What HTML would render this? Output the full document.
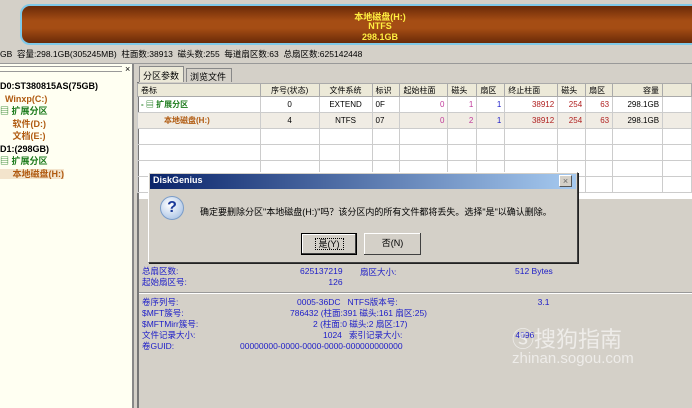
<!DOCTYPE html>
<html><head><meta charset="utf-8"><style>
*{margin:0;padding:0;box-sizing:border-box}
body{width:692px;height:408px;overflow:hidden;background:#d4d0c8;font-family:"Liberation Sans","Noto Sans CJK SC",sans-serif;font-size:9px;position:relative;color:#000}
.a{position:absolute;white-space:nowrap}
.bar{left:20px;top:4px;width:690px;height:41px;border-radius:10px;border:2px solid #7fc9e8;background:linear-gradient(#6a2a08,#a54d14 40%,#a54d14 60%,#6a2a08);}
.bt{color:#ffef40;font-weight:bold;font-size:9px;text-align:center;width:100px;left:330px}
.left{left:0;top:64px;width:134px;height:344px;background:#fffff2;border-right:2px solid #888}
.right{left:137px;top:82px;width:555px;height:326px;border-left:2px solid #777}
table{border-collapse:collapse;position:absolute;left:137px;top:83px}
td{border:1px solid #ccc;height:16px;font-size:8px;padding:0 3px;white-space:nowrap}
.h td{background:#ece9d8;height:13px;border-color:#aaa}
.bl{color:#1c1cc8}
.m{color:#c03a9a}.r{color:#b02020}
</style></head><body>
<div class="a bar"></div>
<div class="a bt" style="top:10px">本地磁盘(H:)</div>
<div class="a bt" style="top:21px">NTFS</div>
<div class="a bt" style="top:32px">298.1GB</div>
<div class="a" style="left:0;top:48px;font-size:8.5px">GB &nbsp;容量:298.1GB(305245MB) &nbsp;柱面数:38913 &nbsp;磁头数:255 &nbsp;每道扇区数:63 &nbsp;总扇区数:625142448</div>
<div class="a" style="left:0;top:63px;width:692px;border-top:1px solid #999"></div>
<div class="a left"></div>
<div class="a" style="left:0;top:66px;width:122px;height:6px;border-top:1px solid #999;border-bottom:1px solid #999"></div>
<div class="a" style="left:125px;top:64px;font-size:9px">×</div>
<div class="a" style="left:0;top:80px;font-weight:bold;font-size:9px;line-height:12.5px">
D0:ST380815AS(75GB)<br>
<span style="color:#b05a10">&nbsp;&nbsp;Winxp(C:)</span><br>
<span style="color:#1a7a1a">▤ 扩展分区</span><br>
<span style="color:#b05a10">&nbsp;&nbsp;&nbsp;&nbsp;&nbsp;软件(D:)</span><br>
<span style="color:#b05a10">&nbsp;&nbsp;&nbsp;&nbsp;&nbsp;文档(E:)</span><br>
D1:(298GB)<br>
<span style="color:#1a7a1a">▤ 扩展分区</span><br>
<span style="color:#b05a10;background:#f3e4cc">&nbsp;&nbsp;&nbsp;&nbsp;&nbsp;本地磁盘(H:)</span></div>
<div class="a" style="left:139px;top:66px;width:45px;height:16px;background:#ece9d8;border:1px solid #888;border-bottom:none;padding:2px 3px">分区参数</div>
<div class="a" style="left:186px;top:68px;width:46px;height:14px;border:1px solid #888;border-bottom:none;padding:1px 3px">浏览文件</div>
<div class="a right"></div>
<div class="a" style="left:139px;top:83px;width:553px;height:116px;background:#fff"></div>
<table>
<tr class="h"><td style="width:123px">卷标</td><td style="width:59px;text-align:center">序号(状态)</td><td style="width:53px;text-align:center">文件系统</td><td style="width:28px">标识</td><td style="width:48px">起始柱面</td><td style="width:29px">磁头</td><td style="width:28px">扇区</td><td style="width:53px">终止柱面</td><td style="width:28px">磁头</td><td style="width:27px">扇区</td><td style="width:50px;text-align:right">容量</td><td style="width:29px"></td></tr>
<tr><td style="color:#1a7a1a;font-weight:bold">- ▤ 扩展分区</td><td style="text-align:center">0</td><td style="text-align:center">EXTEND</td><td>0F</td><td class="m" style="text-align:right">0</td><td class="m" style="text-align:right">1</td><td class="bl" style="text-align:right">1</td><td class="r" style="text-align:right">38912</td><td class="r" style="text-align:right">254</td><td class="r" style="text-align:right">63</td><td style="text-align:right">298.1GB</td><td></td></tr>
<tr style="background:#f0ece4"><td style="color:#b05a10;font-weight:bold;padding-left:26px">本地磁盘(H:)</td><td style="text-align:center">4</td><td style="text-align:center">NTFS</td><td>07</td><td class="m" style="text-align:right">0</td><td class="m" style="text-align:right">2</td><td class="bl" style="text-align:right">1</td><td class="r" style="text-align:right">38912</td><td class="r" style="text-align:right">254</td><td class="r" style="text-align:right">63</td><td style="text-align:right">298.1GB</td><td></td></tr>
<tr><td></td><td></td><td></td><td></td><td></td><td></td><td></td><td></td><td></td><td></td><td></td><td></td></tr>
<tr><td></td><td></td><td></td><td></td><td></td><td></td><td></td><td></td><td></td><td></td><td></td><td></td></tr>
<tr><td></td><td></td><td></td><td></td><td></td><td></td><td></td><td></td><td></td><td></td><td></td><td></td></tr>
<tr><td></td><td></td><td></td><td></td><td></td><td></td><td></td><td></td><td></td><td></td><td></td><td></td></tr>
</table>
<div class="a bl" style="left:142px;top:266px;font-size:8.5px;line-height:11px">总扇区数:<br>起始扇区号:</div>
<div class="a bl" style="left:300px;top:266px;font-size:8.5px;line-height:11px;text-align:right">625137219<br>126</div>
<div class="a bl" style="left:360px;top:266px;font-size:8.5px">扇区大小:</div>
<div class="a bl" style="left:515px;top:266px;font-size:8.5px">512 Bytes</div>
<div class="a" style="left:139px;top:292px;width:553px;border-top:1px solid #999;border-bottom:1px solid #fff"></div>
<div class="a bl" style="left:142px;top:297px;font-size:8.5px;line-height:11px">卷序列号:<br>$MFT簇号:<br>$MFTMirr簇号:<br>文件记录大小:<br>卷GUID:</div>
<div class="a bl" style="left:240px;top:297px;font-size:8.5px;line-height:11px">
<span style="margin-left:57px">0005-36DC &nbsp;&nbsp;NTFS版本号:</span><span style="margin-left:140px">3.1</span><br>
<span style="margin-left:50px">786432 (柱面:391 磁头:161 扇区:25)</span><br>
<span style="margin-left:73px">2 (柱面:0 磁头:2 扇区:17)</span><br>
<span style="margin-left:83px">1024 &nbsp;&nbsp;索引记录大小:</span><span style="margin-left:113px">4096</span><br>
<span style="margin-left:0">00000000-0000-0000-0000-000000000000</span></div>
<div class="a" style="left:512px;top:322px;font-size:22px;color:rgba(255,255,255,.6)">Ⓢ搜狗指南</div>
<div class="a" style="left:512px;top:350px;font-size:15px;color:rgba(255,255,255,.6)">zhinan.sogou.com</div>
<!-- dialog -->
<div class="a" style="left:148px;top:172px;width:430px;height:91px;background:#d4d0c8;border:1px solid #fff;border-right-color:#404040;border-bottom-color:#404040;box-shadow:1px 1px 0 #222"></div>
<div class="a" style="left:150px;top:174px;width:426px;height:15px;background:linear-gradient(90deg,#0a246a,#a6caf0)"></div>
<div class="a" style="left:153px;top:175px;color:#fff;font-weight:bold;font-size:9px">DiskGenius</div>
<div class="a" style="left:559px;top:175px;width:13px;height:12px;background:#d4d0c8;border:1px solid #fff;border-right-color:#555;border-bottom-color:#555;font-size:9px;text-align:center;line-height:10px;color:#666">×</div>
<div class="a" style="left:160px;top:196px;width:24px;height:24px;border-radius:50%;background:radial-gradient(circle at 40% 35%,#fff,#9ab8e0);border:1px solid #7a9cc8;color:#1a3a9a;font-weight:bold;font-size:16px;text-align:center;line-height:22px">?</div>
<div class="a" style="left:200px;top:205px;font-size:9px">确定要删除分区"本地磁盘(H:)"吗？该分区内的所有文件都将丢失。选择"是"以确认删除。</div>
<div class="a" style="left:301px;top:233px;width:56px;height:22px;border:1px solid #000;background:#d4d0c8;box-shadow:inset -1px -1px #404040,inset 1px 1px #fff;text-align:center;line-height:20px;font-size:9px"><span style="outline:1px dotted #000;padding:0 3px">是(Y)</span></div>
<div class="a" style="left:364px;top:233px;width:57px;height:22px;background:#d4d0c8;box-shadow:inset -1px -1px #404040,inset 1px 1px #fff;text-align:center;line-height:20px;font-size:9px">否(N)</div>
</body></html>
